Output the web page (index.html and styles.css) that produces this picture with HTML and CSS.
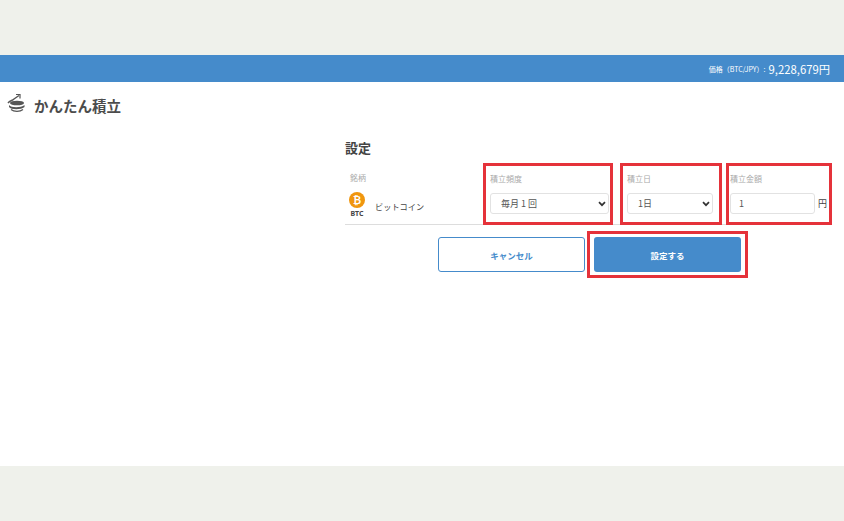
FILE: index.html
```html
<!DOCTYPE html>
<html lang="ja">
<head>
    <meta charset="UTF-8">
    <title>かんたん積立</title>
    <link rel="stylesheet" href="styles.css">
</head>
<body>
    <div class="page">
        <div class="price-bar">
            <span class="price-label">価格（BTC/JPY）:</span>
            <span class="price-value">9,228,679円</span>
        </div>
        <h1 class="page-title">
            <svg class="title-icon" width="20" height="20" viewBox="0 0 20 20">
                <path d="M2 10 C4 7 6 8 8 6 L13 2.5" fill="none" stroke="#555" stroke-width="1.4"/>
                <path d="M10 1.5 L14 1.5 L14 5.5" fill="none" stroke="#555" stroke-width="1.2"/>
                <ellipse cx="11" cy="10" rx="7" ry="2.3" fill="#555"/>
                <path d="M3 12 C5 15 15 15 18.5 12 L18.5 14 C15 17 5 17 3 14 Z" fill="#555"/>
                <path d="M5 16.5 C8 19 14 19 17 16.5" fill="none" stroke="#555" stroke-width="1.2"/>
            </svg>
            かんたん積立
        </h1>
        <div class="settings">
            <h2 class="settings-title">設定</h2>
            <div class="form-row">
                <div class="col-coin">
                    <div class="field-label coin-label">銘柄</div>
                    <div class="coin">
                        <div class="coin-mark">
                            <svg width="16" height="16" viewBox="0 0 16 16">
                                <circle cx="8" cy="8" r="8" fill="#f0960f"/>
                                <text x="8" y="11.5" text-anchor="middle" class="coin-glyph">₿</text>
                            </svg>
                            <span class="coin-code">BTC</span>
                        </div>
                        <span class="coin-name">ビットコイン</span>
                    </div>
                </div>
                <div class="field field-freq">
                    <div class="field-label">積立頻度</div>
                    <select class="control select-freq"><option>毎月 1 回</option></select>
                </div>
                <div class="field field-day">
                    <div class="field-label">積立日</div>
                    <select class="control select-day"><option>1日</option></select>
                </div>
                <div class="field field-amount">
                    <div class="field-label">積立金額</div>
                    <div class="amount">
                        <input class="control amount-input" type="text" value="1">
                        <span class="unit">円</span>
                    </div>
                </div>
            </div>
            <div class="actions">
                <button class="btn btn-cancel">キャンセル</button>
                <div class="btn-highlight"><button class="btn btn-submit">設定する</button></div>
            </div>
        </div>
    </div>
</body>
</html>
```

FILE: styles.css
```css
* {
    box-sizing: border-box;
}
html, body {
    height: 100%;
}
body {
    margin: 0;
    padding: 55px 0;
    background: #eff1eb;
    font-family: "Noto Sans CJK JP", "Noto Sans", sans-serif;
    color: #444;
}
.page {
    height: 411px;
    background: #fff;
}
.price-bar {
    height: 27px;
    padding-right: 14px;
    display: flex;
    align-items: center;
    justify-content: flex-end;
    background: #458bcb;
    color: #fff;
}
.price-label {
    font-size: 7px;
    margin-right: 3px;
}
.price-value {
    font-size: 11.3px;
}
.page-title {
    margin: 0;
    height: 49px;
    padding: 0 0 2px 6px;
    display: flex;
    align-items: center;
    font-size: 14.5px;
    font-weight: 700;
    color: #4c4c4c;
}
.title-icon {
    margin-right: 8px;
    margin-top: -5px;
}
.settings {
    margin-left: 345px;
    width: 488px;
}
.settings-title {
    margin: 7px 0 0;
    font-size: 13px;
    line-height: 19px;
    font-weight: 700;
}
.form-row {
    display: flex;
    width: 483px;
    height: 61px;
    margin-top: 7px;
    border-bottom: 1px solid #ddd;
}
.col-coin {
    flex: none;
    width: 138px;
    padding-top: 8px;
}
.field-label {
    font-size: 8px;
    line-height: 12px;
    color: #aaa;
}
.coin-label {
    padding-left: 5px;
}
.coin {
    display: flex;
    align-items: center;
    margin-top: 8px;
    padding-left: 4px;
}
.coin-mark {
    display: flex;
    flex-direction: column;
    align-items: center;
    width: 16px;
}
.coin-mark svg {
    display: block;
}
.coin-glyph {
    font-family: "DejaVu Sans", sans-serif;
    font-size: 10px;
    font-weight: 700;
    fill: #fff;
}
.coin-code {
    margin-top: 1px;
    font-family: "Noto Sans", sans-serif;
    font-size: 7px;
    line-height: 10px;
    font-weight: 700;
    color: #444;
}
.coin-name {
    margin-left: 10px;
    font-size: 8.2px;
    color: #444;
}
.field {
    flex: none;
    height: 62px;
    margin-top: -1px;
    border: 3px solid #e5323a;
    padding: 7px 4px 0;
}
.field-freq {
    width: 130px;
}
.field-day {
    width: 102px;
    margin-left: 7px;
}
.field-amount {
    width: 106px;
    margin-left: 4px;
    padding-left: 1px;
    padding-right: 0;
}
.field .field-label {
    margin-bottom: 8px;
}
.control {
    height: 21px;
    border: 1px solid #e2e2e2;
    border-radius: 3px;
    background: #fff;
    font-family: inherit;
    font-size: 9px;
    color: #555;
}
select.control {
    display: block;
    appearance: none;
    padding-left: 10px;
    background: #fff url("data:image/svg+xml,%3Csvg xmlns='http://www.w3.org/2000/svg' width='8' height='6'%3E%3Cpath d='M1 1.2 L4 4.2 L7 1.2' fill='none' stroke='%23333' stroke-width='1.7'/%3E%3C/svg%3E") no-repeat right 2px center;
}
.select-freq {
    width: 119px;
}
.select-day {
    width: 86px;
}
.amount {
    display: flex;
    align-items: center;
}
.amount-input {
    width: 85px;
    padding: 0 8px;
}
.unit {
    margin-left: 3px;
    font-size: 9px;
}
.actions {
    display: flex;
    align-items: flex-start;
    margin-top: 12px;
    margin-left: 93px;
}
.btn {
    height: 35px;
    border-radius: 3px;
    font-family: inherit;
    font-size: 8.5px;
    font-weight: 700;
}
.btn-cancel {
    width: 147px;
    background: #fff;
    border: 1px solid #458bcb;
    color: #458bcb;
}
.btn-highlight {
    width: 161px;
    height: 47px;
    margin-left: 2px;
    margin-top: -6px;
    padding: 3px 4px;
    border: 3px solid #e5323a;
}
.btn-submit {
    display: block;
    width: 147px;
    border: 0;
    background: #458bcb;
    color: #fff;
}
```
